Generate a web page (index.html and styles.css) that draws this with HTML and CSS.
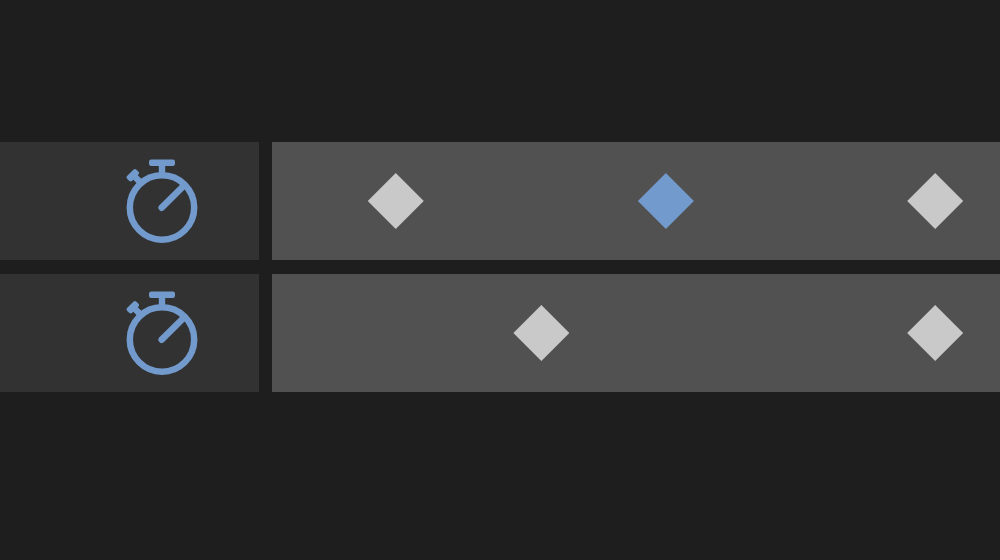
FILE: index.html
```html
<!DOCTYPE html>
<html lang="en">
<head>
<meta charset="utf-8">
<meta name="viewport" content="width=device-width, initial-scale=1">
<title>Keyframe timeline</title>
<link rel="stylesheet" href="styles.css">
</head>
<body>
<svg class="symbols" aria-hidden="true">
  <symbol id="stopwatch" viewBox="0 0 72 84">
    <circle cx="36" cy="48.5" r="32.2" fill="none" stroke="currentColor" stroke-width="6.5"/>
    <rect x="23" y="0.4" width="26" height="6.6" rx="2.2" fill="currentColor"/>
    <path d="M36 5V18M7 16L15 24" fill="none" stroke="currentColor" stroke-width="6.4"/>
    <rect x="0.3" y="12.7" width="13" height="7" rx="2.2" transform="rotate(-45 6.8 16.2)" fill="currentColor"/>
    <path d="M35.7 48.7L58 26.5" fill="none" stroke="currentColor" stroke-width="6.6" stroke-linecap="round"/>
  </symbol>
</svg>
<main class="timeline">
  <section class="row">
    <div class="property">
      <button class="stopwatch" type="button" aria-label="Toggle animation, property 1" aria-pressed="true"><svg class="icon"><use href="#stopwatch"/></svg></button>
    </div>
    <div class="track">
      <button class="keyframe" type="button" aria-label="Keyframe 1" style="left: 17%"></button>
      <button class="keyframe selected" type="button" aria-label="Keyframe 2, selected" style="left: 54.1%"></button>
      <button class="keyframe" type="button" aria-label="Keyframe 3" style="left: 91.1%"></button>
    </div>
  </section>
  <section class="row">
    <div class="property">
      <button class="stopwatch" type="button" aria-label="Toggle animation, property 2" aria-pressed="true"><svg class="icon"><use href="#stopwatch"/></svg></button>
    </div>
    <div class="track">
      <button class="keyframe" type="button" aria-label="Keyframe 1" style="left: 37%"></button>
      <button class="keyframe" type="button" aria-label="Keyframe 2" style="left: 91.1%"></button>
    </div>
  </section>
</main>
</body>
</html>
```
FILE: styles.css
```css
* {
  box-sizing: border-box;
}

body {
  margin: 0;
  background: #1e1e1e;
  font-family: "Liberation Sans", sans-serif;
}

.symbols {
  display: none;
}

.timeline {
  display: grid;
  gap: 14px;
  padding: 142px 0;
}

.row {
  display: grid;
  grid-template-columns: 259px 1fr;
  column-gap: 13px;
}

.property {
  display: flex;
  align-items: center;
  justify-content: flex-end;
  padding: 17px 61px;
  background: #323232;
}

.stopwatch {
  padding: 0;
  border: 0;
  background: none;
  color: #729acc;
  cursor: pointer;
}

.icon {
  display: block;
  width: 72px;
  height: 84px;
}

.track {
  position: relative;
  background: #515151;
}

.keyframe {
  position: absolute;
  top: 50%;
  width: 56px;
  height: 56px;
  padding: 0;
  border: 0;
  background: #c9c9c9;
  clip-path: polygon(50% 0, 100% 50%, 50% 100%, 0 50%);
  transform: translate(-50%, -50%);
  cursor: pointer;
}

.keyframe.selected {
  background: #729acc;
}
```
